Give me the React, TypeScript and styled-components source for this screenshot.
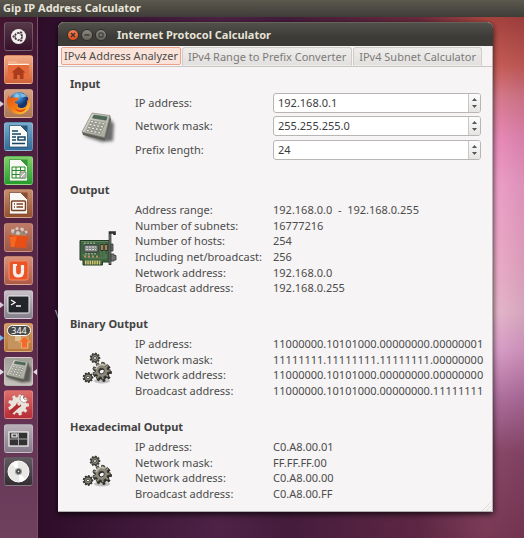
import React, { useState } from "react";
import styled, { createGlobalStyle } from "styled-components";

const Global = createGlobalStyle`
  * { box-sizing: border-box; }
  body { margin: 0; font-family: "Noto Sans", "Open Sans", sans-serif; font-size: 11px; line-height: 16px; color: #4c4c4c; }
  button, input { font: inherit; color: inherit; }
`;

const Desktop = styled.div`
  min-height: 100vh;
  display: flex;
  flex-direction: column;
  background:
    linear-gradient(90deg, transparent 92%, rgba(60, 20, 50, 0.15)),
    linear-gradient(90deg, #2c0c28 6%, #4e2246 42%, #451c3c 55%, rgba(80, 30, 60, 0.7) 80%, transparent 93%),
    linear-gradient(180deg, #a9443e 3%, #cd5f56 12%, #df7f90 18%, #f291c0 26%, #f7a6d0 34%, #f4b4cf 50%, #eebfd3 58%, #e2a5cf 65%, #b574a4 74%, #8c4a6b 84%, #7a3954 100%);
`;

const MenuBar = styled.header`
  height: 17px;
  padding: 0 3px;
  background: linear-gradient(#5b584e, #3e3d38);
  color: #e8e4d8;
  font-weight: 700;
  line-height: 15px;
`;

const Workspace = styled.div`
  flex: 1;
  display: flex;
`;

const Launcher = styled.nav`
  flex: none;
  width: 38px;
  padding: 5px 4px;
  display: flex;
  flex-direction: column;
  gap: 4px;
  background: linear-gradient(#42152f, #4e203f 25%, #5c2b4c 65%, #70405f);
  border-right: 1px solid #795069;
`;

const Tile = styled.button<{ $bg: string }>`
  position: relative;
  width: 29px;
  height: 29px;
  flex: none;
  padding: 0;
  border: 1px solid rgba(255, 255, 255, 0.22);
  border-radius: 3px;
  background: ${(p) => p.$bg};
  display: grid;
  place-items: center;
  &:nth-child(even) { margin-bottom: 1px; }
  svg { display: block; width: 27px; height: 27px; }
`;

const Pip = styled.span<{ $side: "left" | "right"; $color: string }>`
  position: absolute;
  top: 11px;
  ${(p) => p.$side}: -5px;
  border: solid transparent;
  border-width: 3px;
  border-${(p) => p.$side}-color: ${(p) => p.$color};
  border-${(p) => p.$side}-width: 4px;
  border-${(p) => (p.$side === "left" ? "right" : "left")}-width: 0;
`;

const Badge = styled.span`
  position: absolute;
  top: 1px;
  left: 2px;
  width: 24px;
  height: 11px;
  border: 1px solid #fff;
  border-radius: 6px;
  background: #484848;
  color: #fff;
  font-size: 9px;
  line-height: 9px;
  text-align: center;
`;

const Stage = styled.main`
  position: relative;
  flex: 1;
  min-width: 0;
  padding: 5px 31px 26px 20px;
`;

const DesktopLabel = styled.span`
  position: absolute;
  left: 17px;
  top: 289px;
  color: #ddd;
`;

const Window = styled.section`
  position: relative;
  border-radius: 6px 6px 0 0;
  background: #f6f4f4;
  border: solid #b5b0ad;
  border-width: 0 1px 1px 0;
  box-shadow: 0 2px 6px rgba(0, 0, 0, 0.8);
`;

const TitleBar = styled.div`
  height: 24px;
  padding: 0 9px;
  display: flex;
  align-items: center;
  gap: 2px;
  margin-right: -1px;
  border-radius: 6px 6px 0 0;
  background: linear-gradient(#52504a, #3c3b37 60%);
  border-top: 1px solid #66635a;
`;

const WindowButton = styled.button<{ $close?: boolean }>`
  width: 12px;
  height: 12px;
  padding: 0;
  border: 1px solid #302f2b;
  border-radius: 50%;
  display: grid;
  place-items: center;
  background: ${(p) => (p.$close ? "linear-gradient(#f58055, #df4d1b)" : "linear-gradient(#8a877e, #66645d)")};
  color: #35332f;
  svg { display: block; width: 10px; height: 10px; }
`;

const Title = styled.h1`
  margin: 0 0 0 8px;
  font-size: 11px;
  line-height: 16px;
  color: #e6e2d6;
`;

const Tabs = styled.div`
  height: 21px;
  padding: 1px 3px 0;
  display: flex;
  gap: 1px;
  border-bottom: 1px solid #c9c6c3;
`;

const Tab = styled.button<{ $active: boolean }>`
  height: ${(p) => (p.$active ? 18 : 19)}px;
  padding: ${(p) => (p.$active ? "0 2px" : "0 5px")};
  border: 1px solid ${(p) => (p.$active ? "#eba287" : "#cfccc9")};
  border-bottom-color: ${(p) => (p.$active ? "#eba287" : "transparent")};
  border-radius: ${(p) => (p.$active ? "2px" : "3px 3px 0 0")};
  background: ${(p) => (p.$active ? "#fbe3d9" : "linear-gradient(#efedec, #e3e1e0)")};
  color: ${(p) => (p.$active ? "#4c4c4c" : "#7d7a78")};
  line-height: 16px;
  white-space: nowrap;
`;

const Panel = styled.div`
  padding: 9px 11px 9px 12px;
  display: flex;
  flex-direction: column;
  gap: 20px;
`;

const Heading = styled.h2`
  margin: 0;
  font-size: 11px;
  line-height: 16px;
  color: #434343;
`;

const Body = styled.div<{ $tight?: boolean }>`
  margin-top: ${(p) => (p.$tight ? 1 : 4)}px;
  display: grid;
  grid-template-columns: 55px 1fr;
  column-gap: 10px;
  > svg { place-self: center; display: block; overflow: visible; }
`;

const Form = styled.div`
  display: grid;
  grid-template-columns: 138px 1fr;
  grid-template-rows: 23px 24px 22px;
  label { line-height: 20px; }
`;

const Facts = styled.dl`
  margin: 0;
  display: grid;
  grid-template-columns: 138px 1fr;
  grid-auto-rows: 16px 15px 16px;
  dt, dd { margin: 0; white-space: pre; }
`;

const Spin = styled.div`
  height: 20px;
  display: flex;
  overflow: hidden;
  border: 1px solid #b9b5b2;
  border-radius: 3px;
  background: #fff;
`;

const SpinInput = styled.input`
  flex: 1;
  min-width: 0;
  padding: 0 4px;
  border: 0;
  outline: 0;
  background: transparent;
  color: #3c3c3c;
`;

const Steppers = styled.div`
  width: 12px;
  padding: 2px 0;
  display: grid;
  grid-template-rows: 1fr 1fr;
  border-left: 1px solid #c9c6c3;
  background: linear-gradient(#fdfdfd, #e6e4e3);
`;

const Step = styled.button`
  padding: 0;
  border: 0;
  background: none;
  display: grid;
  place-items: center;
  svg { display: block; width: 5px; height: 3px; }
`;

const Grip = styled.svg`
  position: absolute;
  right: 0;
  bottom: 0;
  width: 11px;
  height: 11px;
`;

function gearPath(cx: number, cy: number, outer: number, inner: number, teeth: number, hole: number) {
  const pts: string[] = [];
  const step = (Math.PI * 2) / teeth;
  for (let i = 0; i < teeth; i++) {
    const a = i * step;
    [[-0.3, inner], [-0.2, outer], [0.2, outer], [0.3, inner]].forEach(([k, r]) => {
      pts.push(`${(cx + Math.cos(a + k * step) * r).toFixed(2)} ${(cy + Math.sin(a + k * step) * r).toFixed(2)}`);
    });
  }
  return `M${pts.join("L")}ZM${cx - hole} ${cy}a${hole} ${hole} 0 1 0 ${hole * 2} 0a${hole} ${hole} 0 1 0 ${-hole * 2} 0Z`;
}

const Gears = () => (
  <svg width="32" height="32" viewBox="0 0 32 32" fillRule="evenodd">
    <ellipse cx="20" cy="29" rx="8" ry="2.5" fill="#000" opacity=".22" />
    <path d={gearPath(20.5, 20.5, 9.5, 7, 9, 2.8)} fill="#2c2b25" />
    <path d={gearPath(19.5, 19, 8.8, 6.2, 9, 2.8)} fill="#8c887b" stroke="#3a3830" strokeWidth=".9" />
    <path d="M14 17a6 6 0 0 1 9-3.5" fill="none" stroke="#c9c5b5" strokeWidth="1.5" />
    <path d={gearPath(13, 6, 4.9, 3.4, 9, 1.5)} fill="#56534a" stroke="#26251f" strokeWidth=".9" />
    <path d={gearPath(6, 25.5, 4.9, 3.4, 9, 1.5)} fill="#56534a" stroke="#26251f" strokeWidth=".9" />
    <circle cx="13" cy="6" r="2.3" fill="none" stroke="#aaa698" strokeWidth=".8" />
    <circle cx="6" cy="25.5" r="2.3" fill="none" stroke="#aaa698" strokeWidth=".8" />
  </svg>
);

const Calculator = () => (
  <svg width="34" height="34" viewBox="0 0 34 34">
    <defs>
      <linearGradient id="calcBody" x1="0" y1="0" x2="1" y2="1">
        <stop stopColor="#dcdcd2" /><stop offset="1" stopColor="#a3a399" />
      </linearGradient>
      <filter id="calcShade" x="-30%" y="-30%" width="160%" height="160%"><feGaussianBlur stdDeviation="1.5" /></filter>
    </defs>
    <path d="M3 25 29 8l4 5-1 17-11 1Z" fill="#333" opacity=".7" filter="url(#calcShade)" />
    <path d="m1 21 1 3 22 5.500 6-21-1-4Z" fill="#5d5f56" />
    <path d="M11 2 29 4.500 23.500 26.500 1 21Z" fill="url(#calcBody)" stroke="#85877d" strokeWidth=".7" />
    <path d="m13 4 13 2-1 3.200-13.500-2.200Z" fill="#4e6c59" stroke="#394b40" strokeWidth=".5" />
    {[0, 1, 2, 3].map((r) => [0, 1, 2, 3].map((c) => (
      <path key={`${r}${c}`} d={`M${10 - r * 1.4 + c * 3.8} ${9.4 + r * 3 + c * 0.7}l2.800.5-.8 2-2.800-.5Z`} fill="#f4f4ed" stroke="#66685f" strokeWidth=".6" />
    )))}
  </svg>
);

const NetworkCard = () => (
  <svg width="38" height="36" viewBox="0 0 38 36">
    <path d="M1 9.500h29.500V31h-7v3H4v-5H1Z" fill="#3f6442" stroke="#203c25" />
    <path d="M2 10.500h28M3 24h4v4M9 22v5h18v-4M22 12v14M25 12v14M5 12v10" fill="none" stroke="#7a996c" strokeWidth=".6" />
    <rect x="5" y="14" width="14" height="7" rx="1" fill="#8b8f8c" stroke="#303532" />
    <path d="M7 16h10M7 18.500h10" stroke="#d7dad6" strokeDasharray="2 1" />
    <path d="M6 13v-1.500m3 1.500v-1.500m3 1.500v-1.500m3 1.500v-1.500M7 22v1.500m3-1.500v1.500m3-1.500v1.500m3-1.500v1.500" stroke="#dce0cc" />
    <path d="M23 13v7M27 13v7" stroke="#2a3028" strokeWidth="3" />
    <path d="M23 14v5M27 14v5" stroke="#c78b62" strokeWidth="1.700" />
    <path d="M5 25.500h14" stroke="#bd906b" strokeWidth="2" strokeDasharray="2 2" />
    <path d="M6 31.500h16" stroke="#d1c371" strokeWidth="4" strokeDasharray="1.500 .8" />
    <path d="M35.500 4V1.500H31V34" fill="none" stroke="#2f312f" strokeWidth="2.700" />
    <path d="M31 3v30" stroke="#999e97" strokeWidth=".8" />
    <path d="M32 13h2v7h-2ZM32 23h3v1.500h2V29h-2v1h-3Z" fill="#717572" stroke="#343834" strokeWidth=".8" />
  </svg>
);

const Sheet = ({ color, kind }: { color: string; kind: "doc" | "sheet" | "slide" }) => (
  <svg viewBox="0 0 27 27">
    <path d="M4.500 2.500h11l7 7V24h-18Z" fill="#f8f8f5" stroke={color} strokeWidth=".7" />
    <path d="m15.500 2.500 7 7v-7Z" fill={color} opacity=".8" />
    {kind === "doc" && <path d="M7 8h6M7 11h9M7 14h4M7 17h4M7 20.500h13M13 14h7v3h-7Z" fill="none" stroke={color} strokeWidth="1.500" />}
    {kind === "sheet" && <g fill="none" stroke={color}><path d="M7 10h13v11H7ZM7 13.500h13M7 17.500h13M11 10v11M15.500 10v11" /><path d="M15 15h6v6h-6Z" fill="#b8beb3" stroke="#8a9283" /><path d="m16 20 4-4" stroke="#fff" /></g>}
    {kind === "slide" && <g fill="none" stroke={color} strokeWidth="1.500"><rect x="6.500" y="11" width="14" height="9.500" rx="1" /><path d="M9 14h1m1.500 0H18M9 17h1m1.500 0H18" /></g>}
  </svg>
);

const Dash = () => (
  <svg viewBox="0 0 27 27">
    <circle cx="13.500" cy="13.500" r="7.500" fill="#f1eeee" />
    <circle cx="13.500" cy="13.500" r="3.600" fill="none" stroke="#49343f" strokeWidth="1.700" strokeDasharray="6.500 1.040" />
    <g fill="#49343f" stroke="#f1eeee" strokeWidth=".7"><circle cx="8.700" cy="13.500" r="1.500" /><circle cx="16" cy="9.400" r="1.500" /><circle cx="16" cy="17.600" r="1.500" /></g>
  </svg>
);
const Home = () => (
  <svg viewBox="0 0 27 27">
    <path d="M3 7V5h8l2 2h11v15H3Z" fill="#f4b08d" />
    <path d="M3 8h21v15H3Z" fill="#e66a3a" />
    <path d="M3 8.500h21" stroke="#fff1df" />
    <path d="m13.500 10.500 7 6h-2V23h-3.700v-4h-2.600v4H8.500v-6.500h-2Z" fill="#a93d1d" />
  </svg>
);
const Firefox = () => (
  <svg viewBox="0 0 27 27">
    <defs><radialGradient id="globe" cx=".4" cy=".2"><stop stopColor="#9ed9f5" /><stop offset=".5" stopColor="#347fc4" /><stop offset="1" stopColor="#143572" /></radialGradient>
    <linearGradient id="fox" x1="0" y1="0" x2="1" y2="1"><stop stopColor="#e34d12" /><stop offset=".5" stopColor="#f27b17" /><stop offset="1" stopColor="#ffd63c" /></linearGradient></defs>
    <circle cx="14" cy="12" r="10" fill="url(#globe)" />
    <path d="M4 5c0 2 1 3 1 3 2-1 4-1 6 0 2-1 3 0 3 0l-2 3c-2 0-2 1-2 2l3 1c-1 3 1 4 4 4 4 0 6-4 5-8 1 1 2 2 1-3 3 4 3 9 0 13-4 5-12 6-17 1C1 16 1 9 4 5Z" fill="url(#fox)" />
    <path d="M9 17c3 4 8 4 12 1-2 5-9 6-12-1Z" fill="#e7490d" />
    <path d="M15 3c3 1 5 0 7 4-3-1-3 1-6 0Z" fill="#78b9dc" />
  </svg>
);
const SoftwareBag = () => (
  <svg viewBox="0 0 27 27">
    <path d="M6 8h15v6H6Z" fill="#a98772" />
    <g fill="#d5c9be"><circle cx="8" cy="7" r="2" /><circle cx="12" cy="4.500" r="1.600" /><circle cx="17" cy="5.500" r="2" /><circle cx="21" cy="8" r="1.600" /><circle cx="13" cy="9" r="2" /></g>
    <g fill="#887e87"><circle cx="10" cy="8" r="1.200" /><circle cx="15" cy="7" r="1.300" /><circle cx="19" cy="9" r="1.300" /></g>
    <path d="m4 11 19 1-2 12-15-1Z" fill="#e84f16" /><path d="m5 13 7-1-3 11H6Z" fill="#f36924" />
  </svg>
);
const UbuntuOne = () => (
  <svg viewBox="0 0 27 27">
    <rect x="4" y="4" width="19" height="19" rx="2" fill="#eb5427" stroke="#f48a66" />
    <path d="M9.500 8v7q0 4 4 4t4-4V8" fill="none" stroke="#f8eee9" strokeWidth="3.200" /><path d="M8 8h4" stroke="#f8eee9" strokeWidth="2" />
  </svg>
);
const Terminal = () => (
  <svg viewBox="0 0 27 27">
    <rect x="3" y="5" width="21" height="17" rx="1" fill="#22252a" stroke="#eee" />
    <path d="m6 9 4 2.500L6 14M11 15h5" fill="none" stroke="#f5f5f5" strokeWidth="1.400" />
  </svg>
);
const Updates = () => (
  <svg viewBox="0 0 27 27">
    <path d="M3 12h21v13H3Z" fill="#c5935d" /><path d="M10 12h6v5h-6Z" fill="#dbc091" />
    <path d="m19.500 12 6 6h-3v6h-6v-6h-3Z" fill="#f16c28" stroke="#ffb485" strokeWidth=".7" />
  </svg>
);
const Tools = () => (
  <svg viewBox="0 0 27 27">
    <path d={gearPath(13.5, 14, 10.5, 8, 9, 2.5)} fill="#e9e3dc" fillRule="evenodd" />
    <path d="m5 22 10-9" stroke="#b42f31" strokeWidth="4" />
    <path d="m13 14 5-5" stroke="#e9e3dc" strokeWidth="3" />
    <path d="M17 4a4 4 0 1 0 6 4l-3 1-2-2 1-3Z" fill="#fff" stroke="#817772" strokeWidth=".6" />
  </svg>
);
const Switcher = () => (
  <svg viewBox="0 0 27 27">
    <rect x="4" y="7" width="19" height="14" fill="#333" stroke="#eee" strokeWidth="1.300" />
    <path d="M13.500 7v14M4 14h19" stroke="#aaa" />
    <path d="M7 9h5v3H7Z" fill="#484848" stroke="#fff" strokeWidth="1.200" />
  </svg>
);
const Disc = () => (
  <svg viewBox="0 0 27 27">
    <circle cx="13.500" cy="13.500" r="10.500" fill="#e8e8e4" stroke="#fff" />
    <path d="m13.500 13.500-7-8a10.500 10.500 0 0 1 6-2.500ZM13.500 13.500l7 8a10.500 10.500 0 0 1-6 2.500Z" fill="#fff" />
    <circle cx="13.500" cy="13.500" r="3.500" fill="#999" /><circle cx="13.500" cy="13.500" r="2.200" fill="#303030" /><circle cx="13.500" cy="13.500" r="1" fill="#ddd" />
  </svg>
);

type Launchable = { name: string; bg: string; icon: React.ReactNode; left?: string; right?: string; badge?: string };
const apps: Launchable[] = [
  { name: "Dash home", bg: "linear-gradient(#553848, #35112a)", icon: <Dash /> },
  { name: "Home folder", bg: "linear-gradient(#f2ad87, #cf6136)", icon: <Home /> },
  { name: "Firefox", bg: "linear-gradient(#d7a184, #ab7654)", icon: <Firefox />, left: "#d9cbd7" },
  { name: "Writer", bg: "linear-gradient(#79acce, #316b98)", icon: <Sheet color="#174466" kind="doc" /> },
  { name: "Calc", bg: "linear-gradient(#83cf6b, #269d2c)", icon: <Sheet color="#278a28" kind="sheet" /> },
  { name: "Impress", bg: "linear-gradient(#c58e6e, #954f2e)", icon: <Sheet color="#794226" kind="slide" /> },
  { name: "Software Center", bg: "linear-gradient(#bd7b67, #9e5643)", icon: <SoftwareBag /> },
  { name: "Ubuntu One", bg: "linear-gradient(#d8917a, #ad5a45)", icon: <UbuntuOne /> },
  { name: "Terminal", bg: "linear-gradient(#c9c0c8, #85808b)", icon: <Terminal />, left: "#d9cbd7" },
  { name: "Update Manager", bg: "linear-gradient(#d19a63, #b87539)", icon: <Updates />, left: "#77b9e8", badge: "344" },
  { name: "Gip", bg: "linear-gradient(#a29f98, #c6c1bb)", icon: <Calculator />, left: "#e0d9df", right: "#e0d9df" },
  { name: "System Settings", bg: "linear-gradient(#dc706b, #b52c38)", icon: <Tools /> },
  { name: "Workspace Switcher", bg: "linear-gradient(#b9b0b9, #857b89)", icon: <Switcher /> },
  { name: "Disc", bg: "linear-gradient(#625b61, #342d34)", icon: <Disc /> },
];

type Row = [string, string];
const output: Row[] = [
  ["Address range:", "192.168.0.0  -  192.168.0.255"],
  ["Number of subnets:", "16777216"],
  ["Number of hosts:", "254"],
  ["Including net/broadcast:", "256"],
  ["Network address:", "192.168.0.0"],
  ["Broadcast address:", "192.168.0.255"],
];
const binary: Row[] = [
  ["IP address:", "11000000.10101000.00000000.00000001"],
  ["Network mask:", "11111111.11111111.11111111.00000000"],
  ["Network address:", "11000000.10101000.00000000.00000000"],
  ["Broadcast address:", "11000000.10101000.00000000.11111111"],
];
const hex: Row[] = [
  ["IP address:", "C0.A8.00.01"],
  ["Network mask:", "FF.FF.FF.00"],
  ["Network address:", "C0.A8.00.00"],
  ["Broadcast address:", "C0.A8.00.FF"],
];

const Results = ({ title, rows, icon }: { title: string; rows: Row[]; icon: React.ReactNode }) => (
  <section>
    <Heading>{title}</Heading>
    <Body>
      {icon}
      <Facts>
        {rows.map(([k, v]) => (
          <React.Fragment key={k}><dt>{k}</dt><dd>{v}</dd></React.Fragment>
        ))}
      </Facts>
    </Body>
  </section>
);

const SpinField = ({ id, label, initial }: { id: string; label: string; initial: string }) => {
  const [value, setValue] = useState(initial);
  const bump = (by: number) =>
    setValue((v) => v.replace(/\d+$/, (n) => String(Math.max(0, Number(n) + by))));
  return (
    <>
      <label htmlFor={id}>{label}</label>
      <Spin>
        <SpinInput id={id} value={value} onChange={(e) => setValue(e.target.value)} />
        <Steppers>
          <Step aria-label={`Increase ${label}`} onClick={() => bump(1)}><svg viewBox="0 0 5 3"><path d="M0 3 2.500 0 5 3Z" fill="#555" /></svg></Step>
          <Step aria-label={`Decrease ${label}`} onClick={() => bump(-1)}><svg viewBox="0 0 5 3"><path d="M0 0h5L2.500 3Z" fill="#555" /></svg></Step>
        </Steppers>
      </Spin>
    </>
  );
};

const tabs = ["IPv4 Address Analyzer", "IPv4 Range to Prefix Converter", "IPv4 Subnet Calculator"];

export default function App() {
  const [active, setActive] = useState(0);
  return (
    <Desktop>
      <Global />
      <MenuBar>Gip IP Address Calculator</MenuBar>
      <Workspace>
        <Launcher aria-label="Launcher">
          {apps.map((a) => (
            <Tile key={a.name} aria-label={a.name} $bg={a.bg}>
              {a.icon}
              {a.left && <Pip $side="left" $color={a.left} />}
              {a.right && <Pip $side="right" $color={a.right} />}
              {a.badge && <Badge>{a.badge}</Badge>}
            </Tile>
          ))}
        </Launcher>
        <Stage>
          <DesktopLabel>V</DesktopLabel>
          <Window>
            <TitleBar>
              <WindowButton $close aria-label="Close"><svg viewBox="0 0 10 10"><path d="m3 3 4 4m0-4L3 7" stroke="currentColor" strokeWidth="1.300" /></svg></WindowButton>
              <WindowButton aria-label="Minimize"><svg viewBox="0 0 10 10"><path d="M2.500 5h5" stroke="currentColor" strokeWidth="1.300" /></svg></WindowButton>
              <WindowButton aria-label="Maximize"><svg viewBox="0 0 10 10"><path d="M3 3h4v4H3Z" fill="none" stroke="currentColor" /></svg></WindowButton>
              <Title>Internet Protocol Calculator</Title>
            </TitleBar>
            <Tabs role="tablist">
              {tabs.map((t, i) => (
                <Tab key={t} role="tab" aria-selected={i === active} $active={i === active} onClick={() => setActive(i)}>{t}</Tab>
              ))}
            </Tabs>
            <Panel>
              <section>
                <Heading>Input</Heading>
                <Body $tight>
                  <Calculator />
                  <Form>
                    <SpinField id="ip" label="IP address:" initial="192.168.0.1" />
                    <SpinField id="mask" label="Network mask:" initial="255.255.255.0" />
                    <SpinField id="prefix" label="Prefix length:" initial="24" />
                  </Form>
                </Body>
              </section>
              <Results title="Output" rows={output} icon={<NetworkCard />} />
              <Results title="Binary Output" rows={binary} icon={<Gears />} />
              <Results title="Hexadecimal Output" rows={hex} icon={<Gears />} />
            </Panel>
            <Grip viewBox="0 0 11 11" aria-hidden="true"><path d="M1 11 11 1M5 11l6-6M9 11l2-2" stroke="#dedbd9" /></Grip>
          </Window>
        </Stage>
      </Workspace>
    </Desktop>
  );
}
